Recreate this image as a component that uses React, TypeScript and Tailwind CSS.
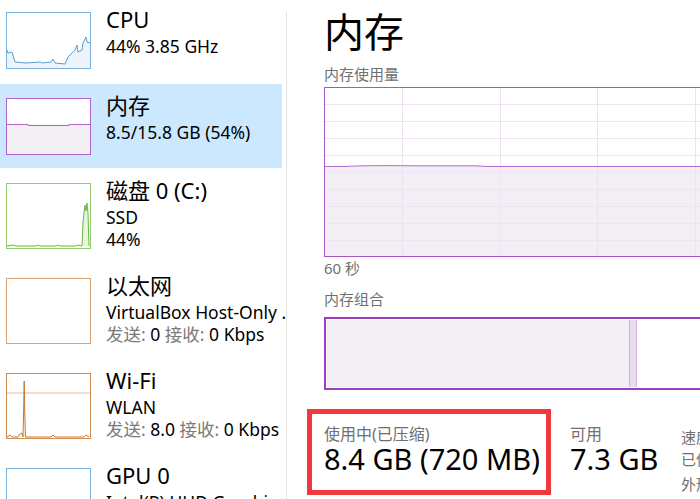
import React from 'react';

const font = "font-['Segoe_UI','Noto_Sans','Noto_Sans_CJK_SC',sans-serif]";

function Thumb({ h, stroke, children }: { h: number; stroke: string; children?: React.ReactNode }) {
  return (
    <svg width={85} height={h} viewBox={`0 0 85 ${h}`} className="block shrink-0">
      <rect x={0} y={0} width={85} height={h} fill="#fff" />
      {children}
      <rect x={0.5} y={0.5} width={84} height={h - 1} fill="none" stroke={stroke} />
    </svg>
  );
}

function SideItem({
  className,
  thumb,
  title,
  lines,
}: {
  className: string;
  thumb: React.ReactNode;
  title: string;
  lines: React.ReactNode[];
}) {
  return (
    <div className={`flex w-[282px] pl-[6px] gap-[15px] ${className}`}>
      {thumb}
      <div className="-mt-[9px] whitespace-nowrap">
        <div className="text-[22px] leading-[32px] text-black">{title}</div>
        {lines.map((l, i) => (
          <div key={i} className="text-[17.5px] leading-[22px] text-black">
            {l}
          </div>
        ))}
      </div>
    </div>
  );
}

const Gray = ({ children }: { children: React.ReactNode }) => <span className="text-[#7a7a7a]">{children}</span>;

function MemGraph() {
  const hLines = [17, 34, 51, 68, 85, 102, 119, 136, 153];
  const vLines = [78, 176, 273, 371, 469];
  return (
    <svg width={480} height={170} viewBox="0 0 480 170" className="block">
      <rect width={480} height={170} fill="#fff" />
      <path d="M1 79.5 L20 79.5 C40 78.5 60 78.5 90 78.8 L150 78.8 L165 79.5 L480 79.5 L480 170 L1 170 Z" fill="#f2eff4" />
      {hLines.map((y) => (
        <line key={y} x1={0} x2={480} y1={y + 0.5} y2={y + 0.5} stroke="#f0e1f4" />
      ))}
      {vLines.map((x) => (
        <line key={x} x1={x + 0.5} x2={x + 0.5} y1={0} y2={170} stroke="#efe0f3" />
      ))}
      <path d="M1 79.5 L20 79.5 C40 78.5 60 78.5 90 78.8 L150 78.8 L165 79.5 L480 79.5" fill="none" stroke="#b46ad0" />
      <rect x={0.5} y={0.5} width={479} height={169} fill="none" stroke="#a855c7" />
    </svg>
  );
}

export default function App() {
  return (
    <div className={`flex w-[700px] h-[499px] overflow-hidden bg-white ${font}`}>
      {/* sidebar */}
      <div className="w-[286px] shrink-0 overflow-hidden">
        <SideItem
          className="h-[84px] pt-[12px]"
          title="CPU"
          lines={['44% 3.85 GHz']}
          thumb={
            <Thumb h={57} stroke="#7ab3dd">
              <path
                d="M1 38 L2 41 L6 40 L9 50 L20 51 L34 50 L36 51 L45 50 L47 47 L49 51 L59 52 L62 45 L66 41 L69 38 L71 33 L72 40 L76 38 L77 31 L80 25 L81 30 L84 31 L84 56 L1 56 Z"
                fill="#eef4fa"
              />
              <polyline
                points="1,38 2,41 6,40 9,50 20,51 34,50 36,51 45,50 47,47 49,51 59,52 62,45 66,41 69,38 71,33 72,40 76,38 77,31 80,25 81,30 84,31"
                fill="none"
                stroke="#5a9fd4"
              />
            </Thumb>
          }
        />
        <div className="bg-[#cce8ff] w-[282px]">
          <SideItem
            className="h-[84px] pt-[14px]"
            title="内存"
            lines={['8.5/15.8 GB (54%)']}
            thumb={
              <Thumb h={57} stroke="#b462d0">
                <rect x={1} y={26.5} width={83} height={30} fill="#f3f0f4" />
                <path d="M1 26.5 H22 V27.5 H63 V26.5 H84" fill="none" stroke="#b462d0" />
              </Thumb>
            }
          />
        </div>
        <SideItem
          className="h-[95px] pt-[15px]"
          title="磁盘 0 (C:)"
          lines={['SSD', '44%']}
          thumb={
            <Thumb h={66} stroke="#94cf6c">
              <path d="M1 63 L76 63 L77 40 L78 30 L79 22 L80 28 L81 20 L82 30 L83 63 Z" fill="#eaf5e2" />
              <polyline
                points="1,63 8,62 10,63 30,63 32,62 34,63 50,63 52,62 54,63 70,63 72,62 76,63 77,40 78,30 79,22 80,28 81,20 82,30 83,63"
                fill="none"
                stroke="#6cb643"
              />
            </Thumb>
          }
        />
        <SideItem
          className="h-[95px] pt-[15px]"
          title="以太网"
          lines={[
            'VirtualBox Host-Only ...',
            <>
              <Gray>发送:</Gray> 0 <Gray>接收:</Gray> 0 Kbps
            </>,
          ]}
          thumb={<Thumb h={66} stroke="#d9a274" />}
        />
        <SideItem
          className="h-[95px] pt-[15px]"
          title="Wi-Fi"
          lines={[
            'WLAN',
            <>
              <Gray>发送:</Gray> 8.0 <Gray>接收:</Gray> 0 Kbps
            </>,
          ]}
          thumb={
            <Thumb h={66} stroke="#cf8b52">
              <line x1={1} x2={84} y1={20} y2={20} stroke="#efd4bf" strokeWidth={1.5} />
              <polyline
                points="1,64 4,62 6,64 12,64 14,61 16,60 17,64 17.6,40 18.2,8 18.8,40 19.4,64 45,64 47,62 49,64 78,64 80,62 83,64"
                fill="none"
                stroke="#c47633"
              />
            </Thumb>
          }
        />
        <SideItem
          className="h-[95px] pt-[15px]"
          title="GPU 0"
          lines={['Intel(R) UHD Graphics']}
          thumb={<Thumb h={66} stroke="#7ab3dd" />}
        />
      </div>

      {/* divider */}
      <div className="w-px shrink-0 mt-[12px] bg-[#e2e2e2]" />

      {/* main */}
      <div className="flex-1 min-w-0 pl-[37px] overflow-hidden">
        <div className="mt-[8px] text-[40px] leading-[48px] text-black">内存</div>
        <div className="mt-[9px] text-[15px] leading-[18px] text-[#707070]">内存使用量</div>
        <div className="mt-[4px]">
          <MemGraph />
        </div>
        <div className="mt-[2px] text-[15px] leading-[18px] text-[#707070]">60 秒</div>
        <div className="mt-[13px] text-[15px] leading-[18px] text-[#707070]">内存组合</div>
        <div className="mt-[9px] w-[480px] h-[73px] border-2 border-[#9d3fc0] p-px flex">
          <div className="w-[302px] bg-[#f3f0f5]" />
          <div className="w-[8px] bg-[#eadbef] border-x border-[#d3b3de]" />
          <div className="flex-1 bg-white" />
        </div>

        {/* stats */}
        <div className="mt-[35px] flex whitespace-nowrap">
          <div className="relative w-[246px] shrink-0">
            <div className="text-[16px] leading-[19px] text-[#707070]">使用中(已压缩)</div>
            <div className="text-[29px] leading-[30px] text-black">8.4 GB (720 MB)</div>
            <div className="mt-[23px] text-[16px] leading-[20px] text-[#707070]">已提交</div>
            <div className="absolute left-[-17px] top-[-16px] w-[244px] h-[86px] border-[5px] border-[#f2393d]" />
          </div>
          <div className="w-[111px] shrink-0">
            <div className="text-[16px] leading-[19px] text-[#707070]">可用</div>
            <div className="text-[29px] leading-[30px] text-black">7.3 GB</div>
            <div className="mt-[23px] text-[16px] leading-[20px] text-[#707070]">已缓存</div>
          </div>
          <div className="shrink-0 text-[15px] leading-[25px] text-[#707070]">
            <div>速度:</div>
            <div className="-mt-[3px]">已使用的插槽:</div>
            <div>外形规格:</div>
          </div>
        </div>
      </div>
    </div>
  );
}
